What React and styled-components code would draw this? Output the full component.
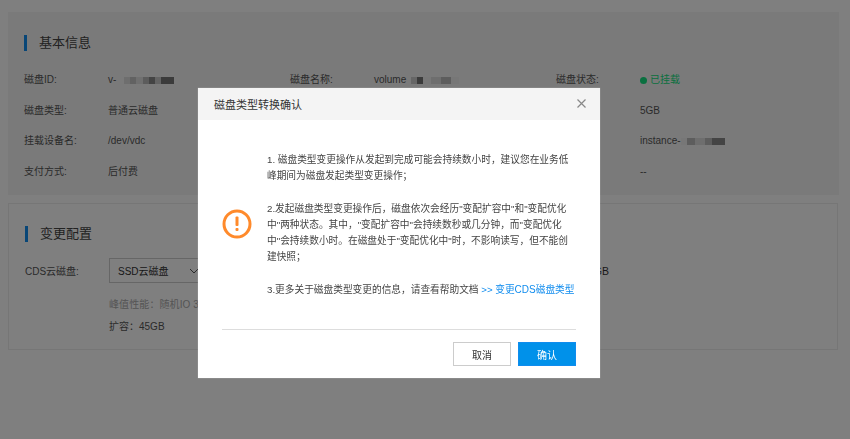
import React from 'react'
import styled, { createGlobalStyle } from 'styled-components'

const GlobalStyle = createGlobalStyle`
    html, body {
        margin: 0;
        padding: 0;
        background: #fff;
        overflow: hidden;
        font-family: "Liberation Sans", "Noto Sans CJK SC", sans-serif;
        color: #555;
    }
`

const Page = styled.div`
    width: 850px;
    height: 439px;
    box-sizing: border-box;
    padding: 12px 11px 0 8px;
    display: flex;
    flex-direction: column;
    gap: 8px;
`
const InfoCard = styled.section`
    height: 183px;
    box-sizing: border-box;
    padding: 23px 16px 0;
    background: #f5f5f5;
`
const ConfigCard = styled.section`
    height: 147px;
    margin-right: 1px;
    box-sizing: border-box;
    padding: 22px 16px 0;
    border: 1px solid #ececec;
`
const Heading = styled.h2`
    margin: 0;
    height: 16px;
    padding-left: 12px;
    border-left: 3px solid #108cee;
    font-size: 13px;
    font-weight: 400;
    line-height: 16px;
    color: #444;
`
const InfoGrid = styled.div`
    display: grid;
    grid-template-columns: repeat(3, 266px);
    grid-auto-rows: 30.7px;
    margin-top: 21px;
    font-size: 10px;
    line-height: 16px;
`
const Field = styled.div`
    display: flex;
    align-items: flex-start;
`
const Label = styled.span`
    width: 84px;
    flex: none;
`
const Value = styled.span`
    display: flex;
    align-items: center;
    color: #555;
    font-size: 10px;
`
const Mosaic = styled.span`
    display: flex;
    margin-left: ${(p) => p.$gap}px;
    margin-top: 1px;
`
const Cell = styled.span`
    width: ${(p) => p.$w}px;
    height: 7px;
    background: ${(p) => p.$shade};
    filter: blur(0.7px);
`
const StatusDot = styled.i`
    width: 7px;
    height: 7px;
    margin-right: 3px;
    border-radius: 50%;
    background: #14e080;
`
const StatusText = styled.span`
    color: #14e080;
`
const FormRow = styled.div`
    display: flex;
    align-items: center;
    margin-top: 16px;
    height: 25px;
    font-size: 10px;
`
const SelectBox = styled.div`
    width: 96px;
    height: 25px;
    box-sizing: border-box;
    padding: 0 5px 0 8px;
    display: flex;
    align-items: center;
    justify-content: space-between;
    border: 1px solid #ccc;
    font-size: 10px;
    color: #333;
`
const Total = styled.span`
    margin-left: auto;
    margin-right: 212px;
    font-size: 10.5px;
    color: #333;
`
const Hint = styled.p`
    margin: 14px 0 0 84px;
    font-size: 10px;
    line-height: 16px;
    letter-spacing: 0.1px;
    color: #aaa;
`
const Expand = styled.p`
    margin: 6px 0 0 84px;
    font-size: 10px;
    line-height: 16px;
    color: #555;
`

const Overlay = styled.div`
    position: fixed;
    inset: 0;
    padding: 88px 0 0 198px;
    background: rgba(0, 0, 0, 0.5);
`
const Modal = styled.div`
    width: 402px;
    height: 290px;
    display: flex;
    flex-direction: column;
    background: #fff;
    box-shadow: 0 0 1px rgba(255, 255, 255, 0.5);
`
const ModalHeader = styled.header`
    height: 32px;
    flex: none;
    padding: 0 14px 1px 16px;
    box-sizing: border-box;
    display: flex;
    align-items: center;
    justify-content: space-between;
    background: #f4f4f4;
    font-size: 11px;
    color: #333;
`
const CloseButton = styled.button`
    display: flex;
    padding: 0;
    border: 0;
    background: none;
    color: #888;
`
const ModalBody = styled.div`
    height: 210px;
    margin: 0 24px;
    flex: none;
    box-sizing: border-box;
    padding: 32px 0 0;
    display: flex;
    align-items: flex-start;
    border-bottom: 1px solid #ddd;
`
const IconCol = styled.div`
    width: 45px;
    flex: none;
    margin-top: 57px;
`
const Message = styled.div`
    font-size: 9.7px;
    line-height: 16px;
    color: #444;
    white-space: nowrap;
`
const Blank = styled.div`
    height: 17px;
`
const DocLink = styled.a`
    color: #108cee;
    text-decoration: none;
`
const Latin = styled.span`
    font-size: 10px;
`
const ModalFooter = styled.footer`
    display: flex;
    justify-content: flex-end;
    gap: 7px;
    padding: 12px 24px 0;
`
const Button = styled.button`
    width: 58px;
    height: 24px;
    padding: 0;
    border: 1px solid ${(p) => (p.$primary ? '#108cee' : '#ccc')};
    background: ${(p) => (p.$primary ? '#0091ea' : '#fff')};
    color: ${(p) => (p.$primary ? '#fff' : '#333')};
    font-family: inherit;
    font-size: 10px;
`

const blur = (cells, gap) => (
    <Mosaic $gap={gap}>
        {cells.map(([w, shade], i) => (
            <Cell key={i} $w={w} $shade={shade} />
        ))}
    </Mosaic>
)

const idCells = [[6, '#dcdcdc'], [6, '#c4c4c4'], [7, '#e0e0e0'], [6, '#b8b8b8'], [6, '#888'], [6, '#c8c8c8'], [13, '#777']]
const nameCells = [[6, '#ccc'], [6, '#777'], [8, '#f0f0f0'], [10, '#ddd'], [10, '#bbb'], [8, '#eee']]
const instanceCells = [[6, '#eee'], [8, '#bbb'], [10, '#ddd'], [7, '#bbb'], [13, '#888']]

const App = () => {
    return (
        <>
            <GlobalStyle />
            <Page>
                <InfoCard>
                    <Heading>基本信息</Heading>
                    <InfoGrid>
                        <Field><Label>磁盘ID:</Label><Value>v-{blur(idCells, 8)}</Value></Field>
                        <Field><Label>磁盘名称:</Label><Value>volume{blur(nameCells, 5)}</Value></Field>
                        <Field>
                            <Label>磁盘状态:</Label>
                            <Value><StatusDot /><StatusText>已挂载</StatusText></Value>
                        </Field>
                        <Field><Label>磁盘类型:</Label><Value>普通云磁盘</Value></Field>
                        <Field />
                        <Field><Label /><Value>5GB</Value></Field>
                        <Field><Label>挂载设备名:</Label><Value>/dev/vdc</Value></Field>
                        <Field />
                        <Field><Label /><Value>instance-{blur(instanceCells, 0)}</Value></Field>
                        <Field><Label>支付方式:</Label><Value>后付费</Value></Field>
                        <Field />
                        <Field><Label /><Value>--</Value></Field>
                    </InfoGrid>
                </InfoCard>
                <ConfigCard>
                    <Heading>变更配置</Heading>
                    <FormRow>
                        <Label>CDS云磁盘:</Label>
                        <SelectBox>
                            SSD云磁盘
                            <svg width="10" height="10" viewBox="0 0 10 10" fill="none" stroke="#555" strokeWidth="1">
                                <path d="M1 3l4 4 4-4" />
                            </svg>
                        </SelectBox>
                        <Total>50GB</Total>
                    </FormRow>
                    <Hint>峰值性能：随机IO 33</Hint>
                    <Expand>扩容：45GB</Expand>
                </ConfigCard>
            </Page>
            <Overlay>
                <Modal>
                    <ModalHeader>
                        磁盘类型转换确认
                        <CloseButton aria-label="关闭">
                            <svg width="9" height="9" viewBox="0 0 9 9" fill="none" stroke="currentColor" strokeWidth="1.2">
                                <path d="M.5.5l8 8M8.500.5l-8 8" />
                            </svg>
                        </CloseButton>
                    </ModalHeader>
                    <ModalBody>
                        <IconCol>
                            <svg width="30" height="30" viewBox="0 0 30 30">
                                <circle cx="15" cy="15" r="13" fill="none" stroke="#ff8a2b" strokeWidth="3" />
                                <rect x="13.500" y="7.500" width="3" height="9.500" rx="1" fill="#ff8a2b" />
                                <rect x="13.500" y="19" width="3" height="3" rx="1" fill="#ff8a2b" />
                            </svg>
                        </IconCol>
                        <Message>
                            1. 磁盘类型变更操作从发起到完成可能会持续数小时，建议您在业务低<br />
                            峰期间为磁盘发起类型变更操作；
                            <Blank />
                            2.发起磁盘类型变更操作后，磁盘依次会经历"变配扩容中"和"变配优化<br />
                            中"两种状态。其中，"变配扩容中"会持续数秒或几分钟，而"变配优化<br />
                            中"会持续数小时。在磁盘处于"变配优化中"时，不影响读写，但不能创<br />
                            建快照；
                            <Blank />
                            3.更多关于磁盘类型变更的信息，请查看帮助文档 <DocLink href="#">&gt;&gt; 变更<Latin>CDS</Latin>磁盘类型</DocLink>
                        </Message>
                    </ModalBody>
                    <ModalFooter>
                        <Button>取消</Button>
                        <Button $primary>确认</Button>
                    </ModalFooter>
                </Modal>
            </Overlay>
        </>
    )
}

export default App
